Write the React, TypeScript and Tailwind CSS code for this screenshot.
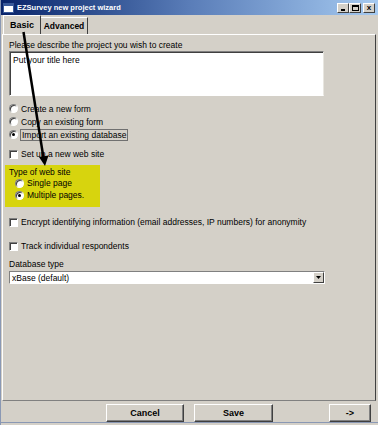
import React from 'react';

const Radio: React.FC<{ checked?: boolean }> = ({ checked }) => (
  <span className="relative inline-flex w-[9px] h-[9px] rounded-full bg-white border border-t-[#808080] border-l-[#808080] border-b-white border-r-white shadow-[inset_1px_1px_0_#404040] shrink-0 items-center justify-center">
    {checked && <span className="w-[3px] h-[3px] rounded-full bg-black" />}
  </span>
);

const Check: React.FC = () => (
  <span className="inline-block w-[9px] h-[9px] bg-white border border-t-[#808080] border-l-[#808080] border-b-white border-r-white shadow-[inset_1px_1px_0_#404040] shrink-0" />
);

const Btn: React.FC<{ label: string; w: string }> = ({ label, w }) => (
  <button className={`${w} h-[18px] bg-[#d4d0c8] border border-t-white border-l-white border-b-[#404040] border-r-[#404040] shadow-[inset_-1px_-1px_0_#808080] font-bold text-[9px] text-black flex items-center justify-center`}>
    {label}
  </button>
);

const App: React.FC = () => {
  return (
    <div className="relative w-[378px] h-[425px] bg-[#d4d0c8] flex flex-col overflow-hidden border-l border-[#8a98b4] font-['Liberation_Sans',Arial,sans-serif] text-[8.5px] leading-[10px] text-black">
      {/* title bar */}
      <div className="h-[15px] flex items-center bg-gradient-to-r from-[#0a246a] via-[#5a7db8] to-[#a6caf0] pl-[2px] pr-[3px]">
        <span className="w-[11px] h-[10px] bg-white border border-[#3a5a9a] border-t-[3px] mr-[3px]" />
        <span className="text-white font-bold text-[7.5px]">EZSurvey new project wizard</span>
        <div className="ml-auto flex items-center">
          <span className="w-[12px] h-[10px] bg-[#d4d0c8] border border-t-white border-l-white border-b-[#404040] border-r-[#404040] flex items-end justify-center pb-[1px]">
            <span className="w-[4px] h-[2px] bg-black" />
          </span>
          <span className="w-[12px] h-[10px] bg-[#d4d0c8] border border-t-white border-l-white border-b-[#404040] border-r-[#404040] flex items-center justify-center">
            <span className="w-[7px] h-[6px] border border-black border-t-2" />
          </span>
          <span className="ml-[2px] w-[12px] h-[10px] bg-[#d4d0c8] border border-t-white border-l-white border-b-[#404040] border-r-[#404040] flex items-center justify-center text-[8px] font-bold leading-none">
            x
          </span>
        </div>
      </div>

      {/* tabs */}
      <div className="h-[19px] flex items-end pl-[2px]">
        <div className="h-[19px] w-[38px] border-t border-l border-white border-r border-r-[#404040] flex items-center justify-center font-bold text-[9px] pb-[1px]">
          Basic
        </div>
        <div className="h-[17px] w-[47px] border-t border-white border-r border-r-[#404040] flex items-center justify-center font-bold text-[8.5px]">
          Advanced
        </div>
      </div>

      {/* panel */}
      <div className="flex-1 ml-[1px] mr-[2px] border-t border-l border-white border-r border-r-[#404040] border-b border-b-[#808080] flex flex-col pl-[6px]">
        <div className="mt-[5px] h-[10px]">Please describe the project you wish to create</div>
        <div className="mt-[1px] w-[315px] h-[45px] bg-white border border-t-[#808080] border-l-[#808080] border-b-white border-r-[#e8e6e0] shadow-[inset_1px_1px_0_#404040] px-[3px] pt-[3px]">
          Put your title here
        </div>

        <div className="mt-[6px] h-[13px] flex items-center gap-[3px]">
          <Radio />
          <span>Create a new form</span>
        </div>
        <div className="h-[13px] flex items-center gap-[3px]">
          <Radio />
          <span>Copy an existing form</span>
        </div>
        <div className="h-[13px] flex items-center gap-[2px]">
          <Radio checked />
          <span className="border border-[#707070] px-[1px] h-[12px] flex items-center">Import an existing database</span>
        </div>

        <div className="mt-[7px] h-[12px] flex items-center gap-[3px]">
          <Check />
          <span>Set up a new web site</span>
        </div>

        <div className="mt-[5px] -ml-[4px] w-[95px] h-[42px] bg-[#d7d40e] pl-[4px] pt-[2px]">
          <div className="h-[10px]">Type of web site</div>
          <div className="h-[12px] flex items-center gap-[3px] pl-[6px]">
            <Radio />
            <span>Single page</span>
          </div>
          <div className="h-[12px] flex items-center gap-[3px] pl-[6px]">
            <Radio checked />
            <span>Multiple pages.</span>
          </div>
        </div>

        <div className="mt-[9px] h-[12px] flex items-center gap-[3px]">
          <Check />
          <span>Encrypt identifying information (email addresses, IP numbers) for anonymity</span>
        </div>
        <div className="mt-[12px] h-[12px] flex items-center gap-[3px]">
          <Check />
          <span>Track individual respondents</span>
        </div>

        <div className="mt-[7px] h-[10px]">Database type</div>
        <div className="mt-[2px] w-[316px] h-[13px] bg-white border border-t-[#808080] border-l-[#808080] border-b-white border-r-white flex items-center">
          <span className="flex-1 pl-[2px]">xBase (default)</span>
          <span className="w-[11px] h-[11px] bg-[#d4d0c8] border border-t-white border-l-white border-b-[#404040] border-r-[#404040] flex items-center justify-center">
            <svg width="5" height="3" viewBox="0 0 5 3"><path d="M0 0h5L2.5 3z" fill="black" /></svg>
          </span>
        </div>
      </div>

      {/* buttons */}
      <div className="h-[21px] flex items-start pt-[3px]">
        <div className="ml-[105px]"><Btn label="Cancel" w="w-[78px]" /></div>
        <div className="ml-[10px]"><Btn label="Save" w="w-[79px]" /></div>
        <div className="ml-[56px]"><Btn label="->" w="w-[42px]" /></div>
      </div>
      <div className="h-[3px] border-t border-[#8a98b4] bg-[#d4d0c8]" />

      {/* annotation arrow */}
      <svg className="absolute left-0 top-0 pointer-events-none" width="378" height="425">
        <line x1="22.5" y1="32" x2="42.5" y2="158" stroke="black" strokeWidth="2.5" />
        <polygon points="44,166 38,157 47.5,155.5" fill="black" />
      </svg>
    </div>
  );
};

export default App;
